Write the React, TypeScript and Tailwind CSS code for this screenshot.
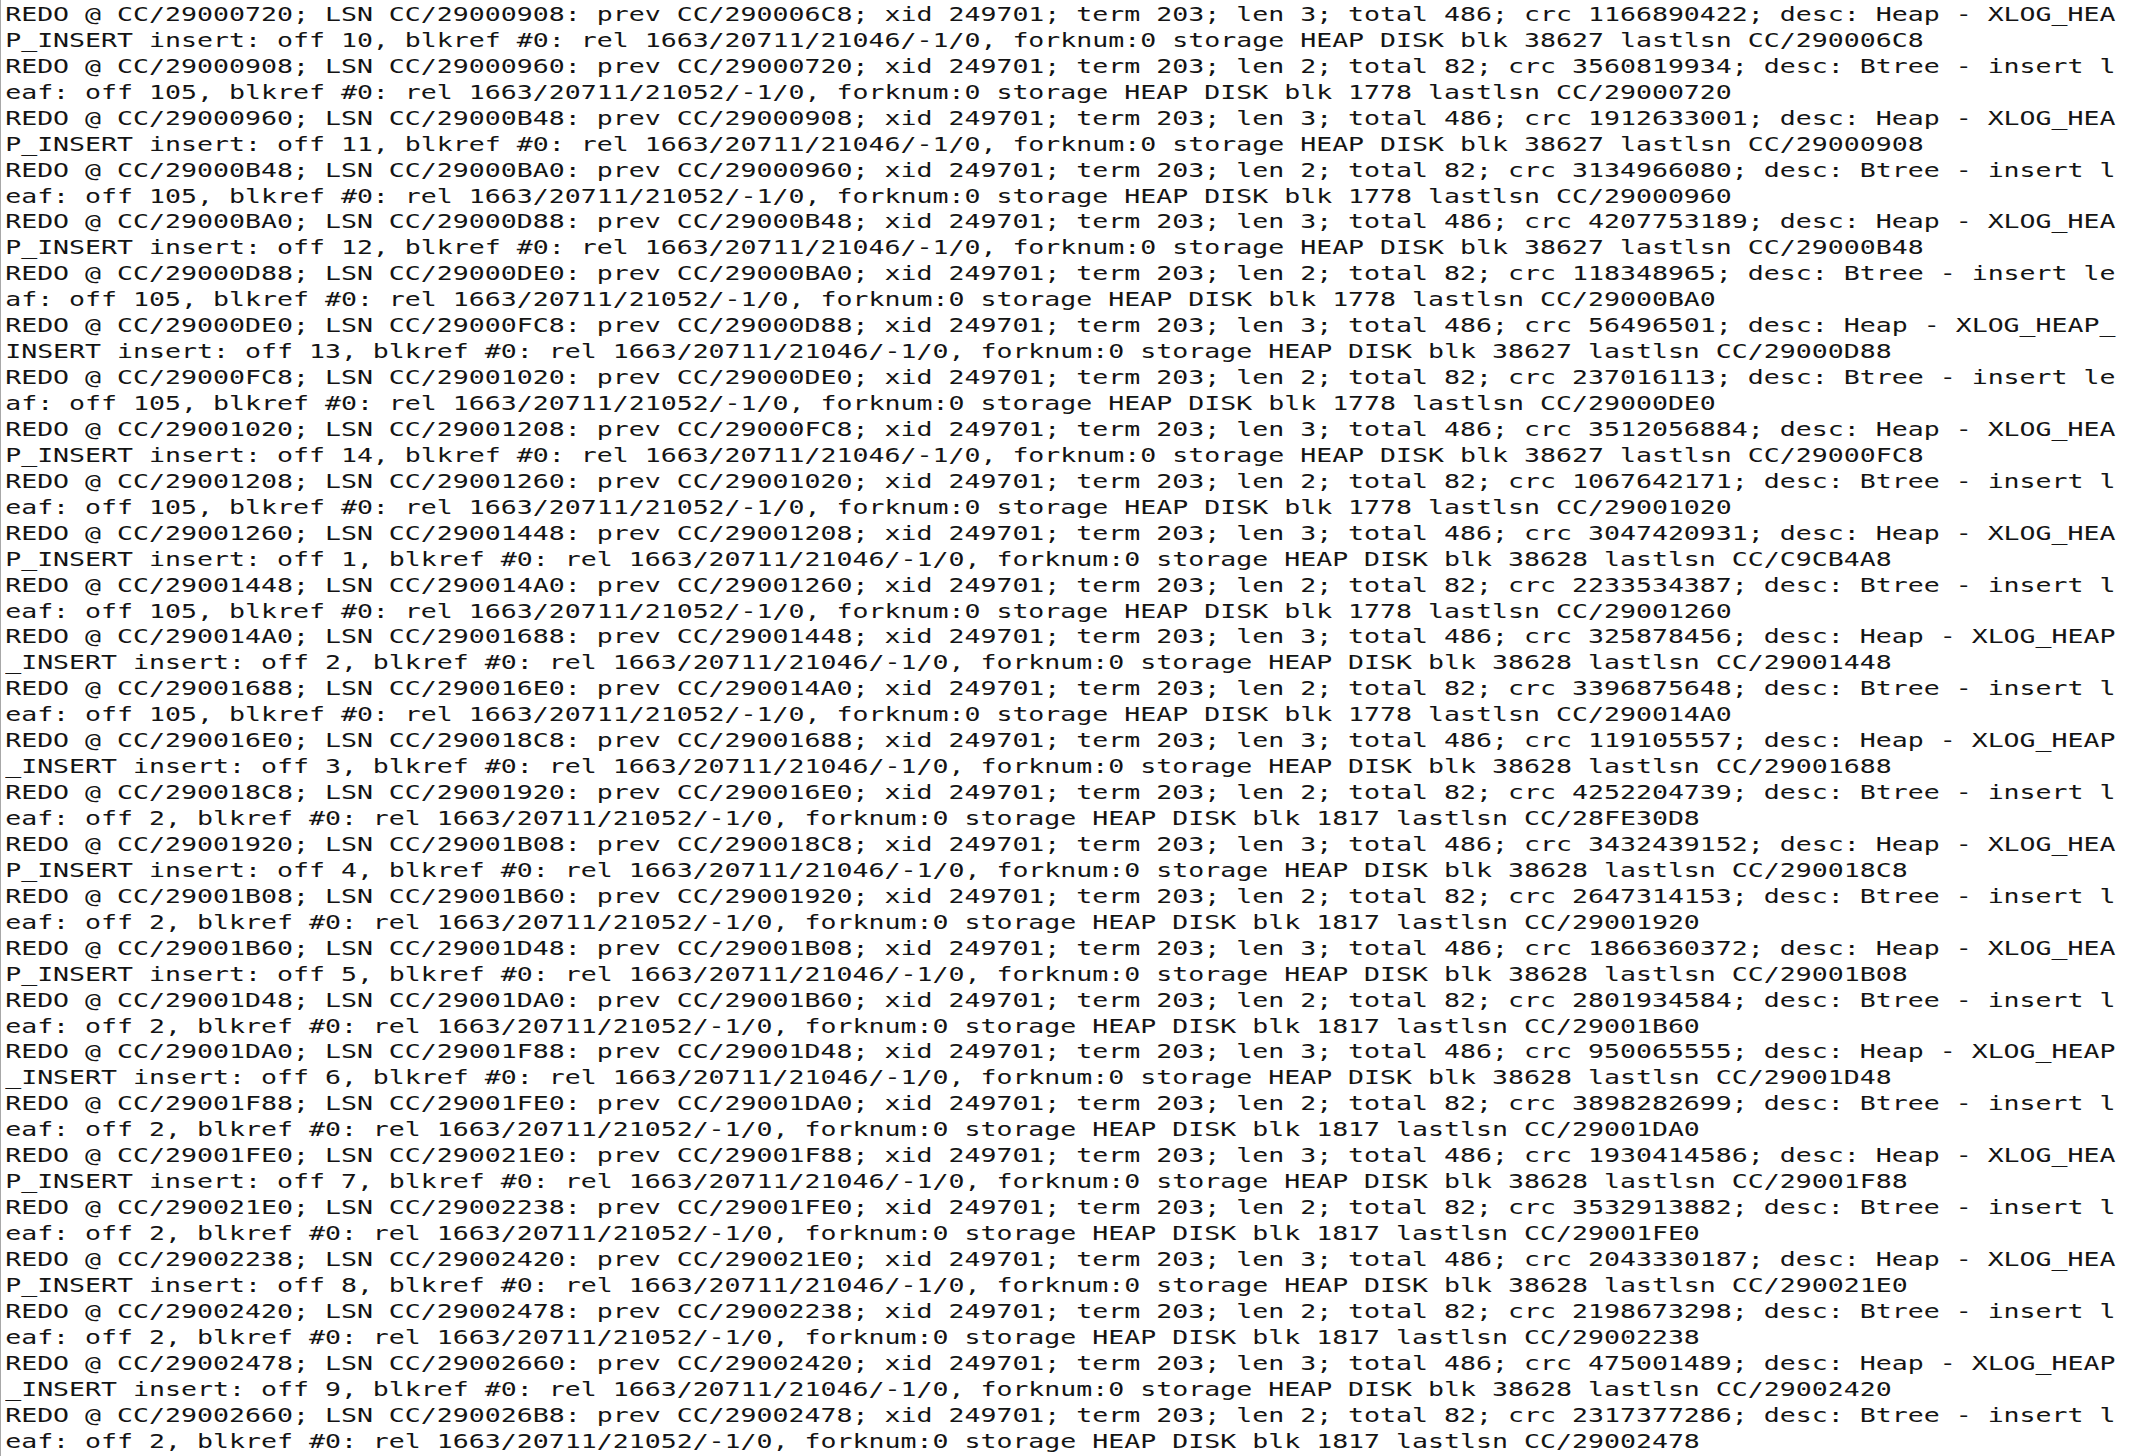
import React from "react";

const lines = [
  "REDO @ CC/29000720; LSN CC/29000908: prev CC/290006C8; xid 249701; term 203; len 3; total 486; crc 1166890422; desc: Heap - XLOG_HEA",
  "P_INSERT insert: off 10, blkref #0: rel 1663/20711/21046/-1/0, forknum:0 storage HEAP DISK blk 38627 lastlsn CC/290006C8",
  "REDO @ CC/29000908; LSN CC/29000960: prev CC/29000720; xid 249701; term 203; len 2; total 82; crc 3560819934; desc: Btree - insert l",
  "eaf: off 105, blkref #0: rel 1663/20711/21052/-1/0, forknum:0 storage HEAP DISK blk 1778 lastlsn CC/29000720",
  "REDO @ CC/29000960; LSN CC/29000B48: prev CC/29000908; xid 249701; term 203; len 3; total 486; crc 1912633001; desc: Heap - XLOG_HEA",
  "P_INSERT insert: off 11, blkref #0: rel 1663/20711/21046/-1/0, forknum:0 storage HEAP DISK blk 38627 lastlsn CC/29000908",
  "REDO @ CC/29000B48; LSN CC/29000BA0: prev CC/29000960; xid 249701; term 203; len 2; total 82; crc 3134966080; desc: Btree - insert l",
  "eaf: off 105, blkref #0: rel 1663/20711/21052/-1/0, forknum:0 storage HEAP DISK blk 1778 lastlsn CC/29000960",
  "REDO @ CC/29000BA0; LSN CC/29000D88: prev CC/29000B48; xid 249701; term 203; len 3; total 486; crc 4207753189; desc: Heap - XLOG_HEA",
  "P_INSERT insert: off 12, blkref #0: rel 1663/20711/21046/-1/0, forknum:0 storage HEAP DISK blk 38627 lastlsn CC/29000B48",
  "REDO @ CC/29000D88; LSN CC/29000DE0: prev CC/29000BA0; xid 249701; term 203; len 2; total 82; crc 118348965; desc: Btree - insert le",
  "af: off 105, blkref #0: rel 1663/20711/21052/-1/0, forknum:0 storage HEAP DISK blk 1778 lastlsn CC/29000BA0",
  "REDO @ CC/29000DE0; LSN CC/29000FC8: prev CC/29000D88; xid 249701; term 203; len 3; total 486; crc 56496501; desc: Heap - XLOG_HEAP_",
  "INSERT insert: off 13, blkref #0: rel 1663/20711/21046/-1/0, forknum:0 storage HEAP DISK blk 38627 lastlsn CC/29000D88",
  "REDO @ CC/29000FC8; LSN CC/29001020: prev CC/29000DE0; xid 249701; term 203; len 2; total 82; crc 237016113; desc: Btree - insert le",
  "af: off 105, blkref #0: rel 1663/20711/21052/-1/0, forknum:0 storage HEAP DISK blk 1778 lastlsn CC/29000DE0",
  "REDO @ CC/29001020; LSN CC/29001208: prev CC/29000FC8; xid 249701; term 203; len 3; total 486; crc 3512056884; desc: Heap - XLOG_HEA",
  "P_INSERT insert: off 14, blkref #0: rel 1663/20711/21046/-1/0, forknum:0 storage HEAP DISK blk 38627 lastlsn CC/29000FC8",
  "REDO @ CC/29001208; LSN CC/29001260: prev CC/29001020; xid 249701; term 203; len 2; total 82; crc 1067642171; desc: Btree - insert l",
  "eaf: off 105, blkref #0: rel 1663/20711/21052/-1/0, forknum:0 storage HEAP DISK blk 1778 lastlsn CC/29001020",
  "REDO @ CC/29001260; LSN CC/29001448: prev CC/29001208; xid 249701; term 203; len 3; total 486; crc 3047420931; desc: Heap - XLOG_HEA",
  "P_INSERT insert: off 1, blkref #0: rel 1663/20711/21046/-1/0, forknum:0 storage HEAP DISK blk 38628 lastlsn CC/C9CB4A8",
  "REDO @ CC/29001448; LSN CC/290014A0: prev CC/29001260; xid 249701; term 203; len 2; total 82; crc 2233534387; desc: Btree - insert l",
  "eaf: off 105, blkref #0: rel 1663/20711/21052/-1/0, forknum:0 storage HEAP DISK blk 1778 lastlsn CC/29001260",
  "REDO @ CC/290014A0; LSN CC/29001688: prev CC/29001448; xid 249701; term 203; len 3; total 486; crc 325878456; desc: Heap - XLOG_HEAP",
  "_INSERT insert: off 2, blkref #0: rel 1663/20711/21046/-1/0, forknum:0 storage HEAP DISK blk 38628 lastlsn CC/29001448",
  "REDO @ CC/29001688; LSN CC/290016E0: prev CC/290014A0; xid 249701; term 203; len 2; total 82; crc 3396875648; desc: Btree - insert l",
  "eaf: off 105, blkref #0: rel 1663/20711/21052/-1/0, forknum:0 storage HEAP DISK blk 1778 lastlsn CC/290014A0",
  "REDO @ CC/290016E0; LSN CC/290018C8: prev CC/29001688; xid 249701; term 203; len 3; total 486; crc 119105557; desc: Heap - XLOG_HEAP",
  "_INSERT insert: off 3, blkref #0: rel 1663/20711/21046/-1/0, forknum:0 storage HEAP DISK blk 38628 lastlsn CC/29001688",
  "REDO @ CC/290018C8; LSN CC/29001920: prev CC/290016E0; xid 249701; term 203; len 2; total 82; crc 4252204739; desc: Btree - insert l",
  "eaf: off 2, blkref #0: rel 1663/20711/21052/-1/0, forknum:0 storage HEAP DISK blk 1817 lastlsn CC/28FE30D8",
  "REDO @ CC/29001920; LSN CC/29001B08: prev CC/290018C8; xid 249701; term 203; len 3; total 486; crc 3432439152; desc: Heap - XLOG_HEA",
  "P_INSERT insert: off 4, blkref #0: rel 1663/20711/21046/-1/0, forknum:0 storage HEAP DISK blk 38628 lastlsn CC/290018C8",
  "REDO @ CC/29001B08; LSN CC/29001B60: prev CC/29001920; xid 249701; term 203; len 2; total 82; crc 2647314153; desc: Btree - insert l",
  "eaf: off 2, blkref #0: rel 1663/20711/21052/-1/0, forknum:0 storage HEAP DISK blk 1817 lastlsn CC/29001920",
  "REDO @ CC/29001B60; LSN CC/29001D48: prev CC/29001B08; xid 249701; term 203; len 3; total 486; crc 1866360372; desc: Heap - XLOG_HEA",
  "P_INSERT insert: off 5, blkref #0: rel 1663/20711/21046/-1/0, forknum:0 storage HEAP DISK blk 38628 lastlsn CC/29001B08",
  "REDO @ CC/29001D48; LSN CC/29001DA0: prev CC/29001B60; xid 249701; term 203; len 2; total 82; crc 2801934584; desc: Btree - insert l",
  "eaf: off 2, blkref #0: rel 1663/20711/21052/-1/0, forknum:0 storage HEAP DISK blk 1817 lastlsn CC/29001B60",
  "REDO @ CC/29001DA0; LSN CC/29001F88: prev CC/29001D48; xid 249701; term 203; len 3; total 486; crc 950065555; desc: Heap - XLOG_HEAP",
  "_INSERT insert: off 6, blkref #0: rel 1663/20711/21046/-1/0, forknum:0 storage HEAP DISK blk 38628 lastlsn CC/29001D48",
  "REDO @ CC/29001F88; LSN CC/29001FE0: prev CC/29001DA0; xid 249701; term 203; len 2; total 82; crc 3898282699; desc: Btree - insert l",
  "eaf: off 2, blkref #0: rel 1663/20711/21052/-1/0, forknum:0 storage HEAP DISK blk 1817 lastlsn CC/29001DA0",
  "REDO @ CC/29001FE0; LSN CC/290021E0: prev CC/29001F88; xid 249701; term 203; len 3; total 486; crc 1930414586; desc: Heap - XLOG_HEA",
  "P_INSERT insert: off 7, blkref #0: rel 1663/20711/21046/-1/0, forknum:0 storage HEAP DISK blk 38628 lastlsn CC/29001F88",
  "REDO @ CC/290021E0; LSN CC/29002238: prev CC/29001FE0; xid 249701; term 203; len 2; total 82; crc 3532913882; desc: Btree - insert l",
  "eaf: off 2, blkref #0: rel 1663/20711/21052/-1/0, forknum:0 storage HEAP DISK blk 1817 lastlsn CC/29001FE0",
  "REDO @ CC/29002238; LSN CC/29002420: prev CC/290021E0; xid 249701; term 203; len 3; total 486; crc 2043330187; desc: Heap - XLOG_HEA",
  "P_INSERT insert: off 8, blkref #0: rel 1663/20711/21046/-1/0, forknum:0 storage HEAP DISK blk 38628 lastlsn CC/290021E0",
  "REDO @ CC/29002420; LSN CC/29002478: prev CC/29002238; xid 249701; term 203; len 2; total 82; crc 2198673298; desc: Btree - insert l",
  "eaf: off 2, blkref #0: rel 1663/20711/21052/-1/0, forknum:0 storage HEAP DISK blk 1817 lastlsn CC/29002238",
  "REDO @ CC/29002478; LSN CC/29002660: prev CC/29002420; xid 249701; term 203; len 3; total 486; crc 475001489; desc: Heap - XLOG_HEAP",
  "_INSERT insert: off 9, blkref #0: rel 1663/20711/21046/-1/0, forknum:0 storage HEAP DISK blk 38628 lastlsn CC/29002420",
  "REDO @ CC/29002660; LSN CC/290026B8: prev CC/29002478; xid 249701; term 203; len 2; total 82; crc 2317377286; desc: Btree - insert l",
  "eaf: off 2, blkref #0: rel 1663/20711/21052/-1/0, forknum:0 storage HEAP DISK blk 1817 lastlsn CC/29002478",
];

const App = () => {
  return (
    <div className="w-[2144px] h-[1456px] overflow-hidden bg-white border-l border-[#a8a8a8]">
      {/* log text is stretched wide in the capture, so scale the block horizontally */}
      <div
        className="origin-top-left scale-x-[1.384] pl-[3px] -mt-[24px] text-[19.2px] leading-[25.93px] text-[#141414] whitespace-pre"
        style={{ fontFamily: '"DejaVu Sans Mono", "Liberation Mono", monospace' }}
      >
        {/* tail of the line above, cut off by the top edge */}
        <div>_</div>
        {lines.map((l, i) => (
          <div key={i}>{l}</div>
        ))}
      </div>
    </div>
  );
};

export default App;
